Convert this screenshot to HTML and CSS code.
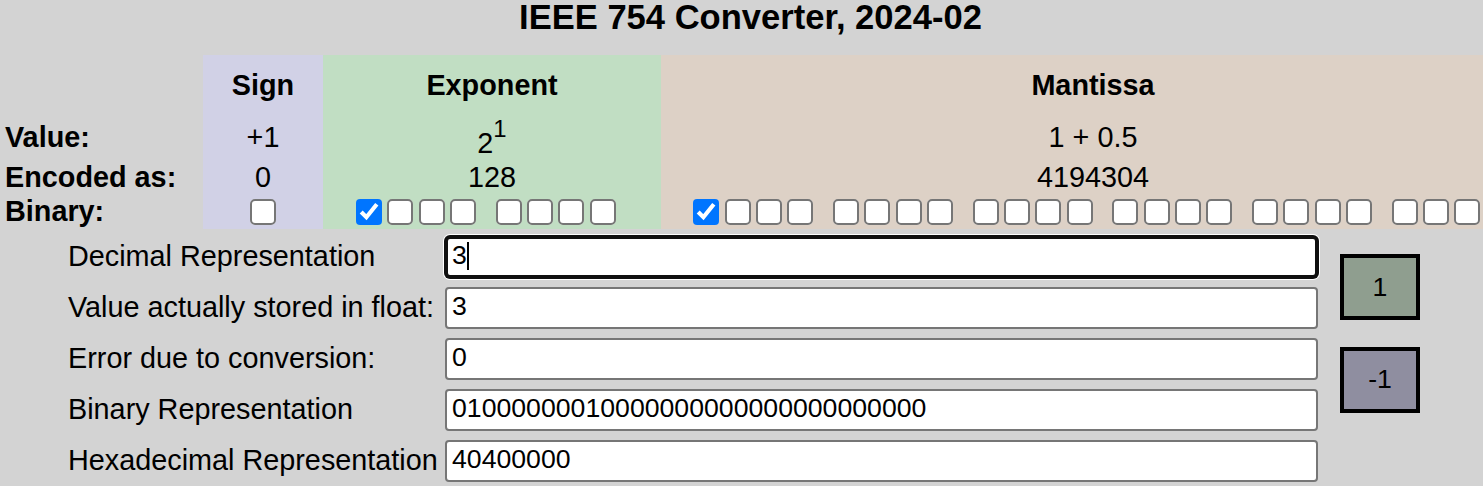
FILE: index.html
```html
<!DOCTYPE html>
<html lang="en">
<head>
<meta charset="utf-8">
<title>IEEE 754 Converter</title>
<link rel="stylesheet" href="styles.css">
</head>
<body>
<div class="page">
  <h1 class="title">IEEE 754 Converter, 2024-02</h1>
  <table class="bits">
    <colgroup>
      <col class="col-label">
      <col class="col-sign">
      <col class="col-exp">
      <col class="col-man">
    </colgroup>
    <tr class="row-head">
      <th class="lbl"></th>
      <th class="sign">Sign</th>
      <th class="exp">Exponent</th>
      <th class="man">Mantissa</th>
    </tr>
    <tr class="row-value">
      <th class="lbl">Value:</th>
      <td class="sign">+1</td>
      <td class="exp"><span class="pow">2<sup>1</sup></span></td>
      <td class="man">1 + 0.5</td>
    </tr>
    <tr class="row-enc">
      <th class="lbl">Encoded as:</th>
      <td class="sign">0</td>
      <td class="exp">128</td>
      <td class="man">4194304</td>
    </tr>
    <tr class="row-bin">
      <th class="lbl">Binary:</th>
      <td class="sign"><div class="boxes"><input type="checkbox" class="cb"></div></td>
      <td class="exp bitcell">
        <div class="boxes">
          <div class="grp"><input type="checkbox" class="cb" checked><input type="checkbox" class="cb"><input type="checkbox" class="cb"><input type="checkbox" class="cb"></div>
          <div class="grp"><input type="checkbox" class="cb"><input type="checkbox" class="cb"><input type="checkbox" class="cb"><input type="checkbox" class="cb"></div>
        </div>
      </td>
      <td class="man bitcell">
        <div class="boxes">
          <div class="grp"><input type="checkbox" class="cb" checked><input type="checkbox" class="cb"><input type="checkbox" class="cb"><input type="checkbox" class="cb"></div>
          <div class="grp"><input type="checkbox" class="cb"><input type="checkbox" class="cb"><input type="checkbox" class="cb"><input type="checkbox" class="cb"></div>
          <div class="grp"><input type="checkbox" class="cb"><input type="checkbox" class="cb"><input type="checkbox" class="cb"><input type="checkbox" class="cb"></div>
          <div class="grp"><input type="checkbox" class="cb"><input type="checkbox" class="cb"><input type="checkbox" class="cb"><input type="checkbox" class="cb"></div>
          <div class="grp"><input type="checkbox" class="cb"><input type="checkbox" class="cb"><input type="checkbox" class="cb"><input type="checkbox" class="cb"></div>
          <div class="grp"><input type="checkbox" class="cb"><input type="checkbox" class="cb"><input type="checkbox" class="cb"></div>
        </div>
      </td>
    </tr>
  </table>

  <div class="form">
    <label class="flabel">Decimal Representation</label>
    <div class="field-wrap">
      <input class="field focused" type="text" value="3">
      <span class="caret"></span>
    </div>
    <div class="buttons">
      <button class="btn btn-plus" type="button">1</button>
      <button class="btn btn-minus" type="button">-1</button>
    </div>

    <label class="flabel">Value actually stored in float:</label>
    <div class="field-wrap"><input class="field" type="text" value="3"></div>

    <label class="flabel">Error due to conversion:</label>
    <div class="field-wrap"><input class="field" type="text" value="0"></div>

    <label class="flabel">Binary Representation</label>
    <div class="field-wrap"><input class="field" type="text" value="01000000010000000000000000000000"></div>

    <label class="flabel">Hexadecimal Representation</label>
    <div class="field-wrap"><input class="field" type="text" value="40400000"></div>
  </div>
</div>
</body>
</html>
```

FILE: styles.css
```css
html, body {
  margin: 0;
  padding: 0;
  overflow: hidden;
  background: #d3d3d3;
}

body {
  font-family: "Liberation Sans", Arial, sans-serif;
  font-size: 28.8px;
  color: #000;
}

.page {
  width: 1501px;
}

.title {
  margin: 0;
  font-size: 34.56px;
  line-height: 1;
  font-weight: bold;
  text-align: center;
}

/* ---------- bit table ---------- */
.bits {
  margin-top: 20.5px;
  width: 1525px;
  table-layout: fixed;
  border-collapse: collapse;
  border-spacing: 0;
}

.col-label { width: 203px; }
.col-sign  { width: 120px; }
.col-exp   { width: 338px; }
.col-man   { width: 864px; }

.bits th,
.bits td {
  padding: 0;
  text-align: center;
  vertical-align: middle;
  font-weight: normal;
  white-space: nowrap;
}

.bits th.sign,
.bits th.exp,
.bits th.man,
.bits th.lbl {
  font-weight: bold;
}

.bits th.lbl {
  text-align: left;
  padding-left: 5px;
}

.sign { background: #d1d1e6; }
.exp  { background: #c1dec3; }
.man  { background: #ddd1c6; }

.row-head  { height: 60px; }
.row-value { height: 45px; }
.row-enc   { height: 34px; }
.row-bin   { height: 35px; }

.pow {
  display: inline-block;
  padding-top: 12px;
}

sup {
  font-size: 0.83em;
  line-height: 0;
  vertical-align: 0.68em;
}

.bitcell {
  padding-right: 12.6px !important;
}

.boxes {
  display: flex;
  justify-content: center;
  align-items: center;
  gap: 19.7px;
}

.grp {
  display: flex;
  gap: 5.33px;
}

.cb {
  zoom: 2;
  margin: 0;
  width: 13px;
  height: 13px;
}

/* ---------- form ---------- */
.form {
  margin-top: 6.7px;
  padding-left: 68px;
  display: grid;
  grid-template-columns: 377px 873px 80px;
  grid-auto-rows: 42px;
  row-gap: 9px;
  column-gap: 0;
}

.flabel {
  align-self: center;
  white-space: nowrap;
}

.field-wrap {
  position: relative;
}

.field {
  box-sizing: border-box;
  width: 873px;
  height: 42px;
  margin: 0;
  padding: 0 5px 3px;
  border: 2px solid #767676;
  border-radius: 4px;
  background: #fff;
  font-family: "Liberation Sans", Arial, sans-serif;
  font-size: 26.67px;
  color: #000;
  outline: none;
}

.field.focused {
  border: 3px solid #101010;
  padding-left: 4px;
  border-radius: 5px;
  box-shadow: 0 0 0 1px #101010, 0 0 0 2px #fff;
}

.caret {
  position: absolute;
  left: 22px;
  top: 6px;
  width: 2px;
  height: 28px;
  background: #000;
}

.buttons {
  grid-column: 3;
  grid-row: 1 / span 5;
  margin-left: 22px;
  padding-top: 18.3px;
  display: flex;
  flex-direction: column;
  gap: 26.7px;
}

.btn {
  box-sizing: border-box;
  width: 80px;
  height: 66px;
  margin: 0;
  padding: 0;
  border: 4px solid #000;
  border-radius: 0;
  font-family: "Liberation Sans", Arial, sans-serif;
  font-size: 26.67px;
  color: #000;
}

.btn-plus  { background: #8f9e8f; }
.btn-minus { background: #8f8ea0; }
```
